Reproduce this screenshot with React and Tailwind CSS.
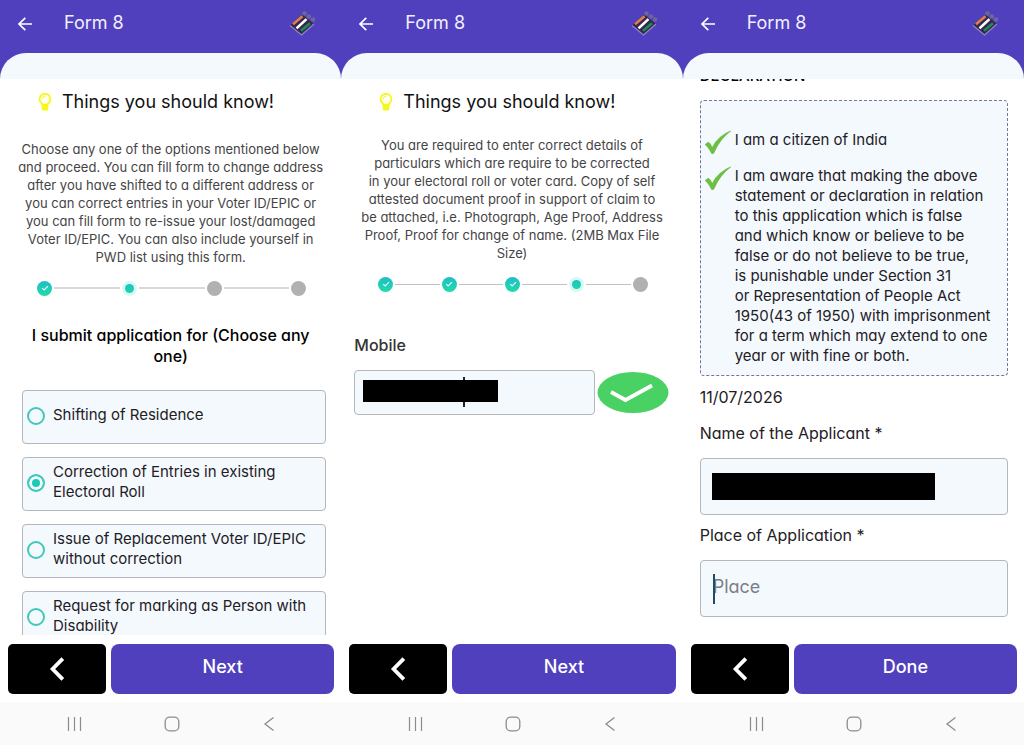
import React, { useState } from "react";

function EciLogo() {
  return (
    <svg viewBox="0 0 40 40" className="size-10" aria-hidden="true">
      <path d="M7 21.5 L19.5 10.5 L31 20 L18.5 31 Z" fill="#34284f" />
      <path d="M7 21.5 L18.5 31 L31 20" fill="none" stroke="#8f85c0" strokeWidth="1.3" />
      <g fill="#6f659c">
        <circle cx="21.5" cy="9.5" r="2.3" />
        <circle cx="25.8" cy="12.5" r="2.3" />
        <circle cx="30" cy="15.5" r="2.3" />
      </g>
      <g strokeWidth="2.6" strokeLinecap="square">
        <path d="M11 19.5 L18.5 13" stroke="#e08146" />
        <path d="M14.5 23.5 L22.5 16" stroke="#ffffff" />
        <path d="M19 26 L26 20" stroke="#1f8a55" />
      </g>
    </svg>
  );
}

function Header() {
  return (
    <header className="shrink-0 bg-[#5140bd]">
      <div className="flex h-[53px] items-start pl-4 pr-[18px]">
        <button type="button" aria-label="Back" className="mt-[15px] flex size-[18px] items-center justify-center">
          <svg viewBox="0 0 18 18" className="size-[18px]" fill="none" stroke="#fff" strokeWidth="1.7">
            <path d="M16 9 H3 M9.3 2.8 L3 9 L9.3 15.2" />
          </svg>
        </button>
        <h1 className="ml-[30px] mt-[11px] flex-1 text-lg leading-6 text-[#f1effc]">Form 8</h1>
        <div className="mt-1">
          <EciLogo />
        </div>
      </div>
      <div className="h-[26px] rounded-t-[30px] bg-[#f4f9fe]" />
    </header>
  );
}

function Footer({ label }) {
  return (
    <footer className="shrink-0">
      <div className="flex h-[67px] gap-[5px] pb-2 pl-2 pr-[7px] pt-[9px]">
        <button type="button" aria-label="Previous" className="flex w-[98px] items-center justify-center rounded-[5px] bg-black">
          <svg viewBox="0 0 16 24" className="h-6 w-4" fill="none" stroke="#fff" strokeWidth="3.8">
            <path d="M13.8 1.6 L3.6 12 L13.8 22.4" />
          </svg>
        </button>
        <button type="button" className="flex-1 rounded-lg bg-[#5140bd] pb-1 text-lg font-medium text-white">
          {label}
        </button>
      </div>
      <nav className="flex h-[43px] items-center justify-around bg-[#fafafa] pl-[26px] pr-6 text-[#8c8c8c]">
        <button type="button" aria-label="Recent apps">
          <svg viewBox="0 0 16 16" className="size-4" fill="none" stroke="currentColor" strokeWidth="1.2">
            <path d="M1.5 1 V15 M7.5 1 V15 M13.5 1 V15" />
          </svg>
        </button>
        <button type="button" aria-label="Home">
          <svg viewBox="0 0 16 16" className="size-4" fill="none" stroke="currentColor" strokeWidth="1.3">
            <rect x="1.2" y="1.2" width="13.6" height="13.6" rx="4.4" />
          </svg>
        </button>
        <button type="button" aria-label="Navigate back">
          <svg viewBox="0 0 16 16" className="size-4" fill="none" stroke="currentColor" strokeWidth="1.3">
            <path d="M12.5 1.6 L4 8 L12.5 14.4" />
          </svg>
        </button>
      </nav>
    </footer>
  );
}

function Phone({ action, children }) {
  return (
    <section className="flex min-w-0 flex-col overflow-hidden bg-white">
      <Header />
      <main className="min-h-0 flex-1 overflow-hidden">{children}</main>
      <Footer label={action} />
    </section>
  );
}

function TipTitle() {
  return (
    <div className="flex h-[37px] items-center gap-[9px] pl-[37px] pt-[9px]">
      <svg viewBox="0 0 16 20" className="h-5 w-4" aria-hidden="true">
        <path
          d="M8 1.8 A5.4 5.4 0 0 0 4.9 11.6 Q5.4 12.2 5.5 13.2 H10.5 Q10.6 12.2 11.1 11.6 A5.4 5.4 0 0 0 8 1.8 Z"
          fill="#fffff0"
          stroke="#f6f81c"
          strokeWidth="1.8"
        />
        <path d="M5 7.2 A3 3 0 0 1 8 4.4" fill="none" stroke="#f6f81c" strokeWidth="1" />
        <path d="M4.8 11.8 H11.2 V17.2 Q11.2 18.6 9.8 18.6 H6.2 Q4.8 18.6 4.8 17.2 Z" fill="#f6f81c" />
      </svg>
      <h2 className="whitespace-nowrap text-lg leading-7 text-[#111]">Things you should know!</h2>
    </div>
  );
}

function Step({ state }) {
  if (state === "todo") return <span className="size-[15px] shrink-0 rounded-full bg-[#b1b1b1]" />;
  if (state === "current") {
    return (
      <span className="flex size-[15px] shrink-0 items-center justify-center rounded-full bg-[#d5faf5]">
        <span className="size-[9px] rounded-full bg-linear-to-b from-[#22bfc4] to-[#22d6a8]" />
      </span>
    );
  }
  return (
    <span className="flex size-[15px] shrink-0 items-center justify-center rounded-full bg-linear-to-b from-[#21bdca] to-[#22dba3]">
      <svg viewBox="0 0 10 10" className="size-2.5" fill="none" stroke="#e9fffb" strokeWidth="1.1">
        <path d="M2.2 5.2 L4.2 7 L8 3.2" />
      </svg>
    </span>
  );
}

function Stepper({ steps, line }) {
  return (
    <div className="mt-3.5 flex h-4 items-center gap-0.5 pl-[37px] pr-[35px]">
      {steps.map((state, i) => (
        <React.Fragment key={i}>
          {i > 0 && <span className={`flex-1 ${line}`} />}
          <Step state={state} />
        </React.Fragment>
      ))}
    </div>
  );
}

const OPTIONS = [
  "Shifting of Residence",
  "Correction of Entries in existing\nElectoral Roll",
  "Issue of Replacement Voter ID/EPIC\nwithout correction",
  "Request for marking as Person with\nDisability",
];

function ChooseApplication() {
  const [selected, setSelected] = useState(1);
  return (
    <Phone action="Next">
      <TipTitle />
      <p className="mt-6 whitespace-pre text-center text-[13px] leading-[18px] text-[#444]">
        {`Choose any one of the options mentioned below
and proceed. You can fill form to change address
after you have shifted to a different address or
you can correct entries in your Voter ID/EPIC or
you can fill form to re-issue your lost/damaged
Voter ID/EPIC. You can also include yourself in
PWD list using this form.`}
      </p>
      <Stepper steps={["done", "current", "todo", "todo"]} line="h-0.5 bg-[#d9d9d9]" />
      <h3 className="mt-[29px] whitespace-pre text-center text-base font-medium leading-[21px] text-black">
        {"I submit application for (Choose any\none)"}
      </h3>
      <div className="mt-[23px] flex flex-col gap-[13px] pl-[22px] pr-[15px]">
        {OPTIONS.map((text, i) => (
          <label key={text} className="flex h-[54px] items-center gap-2 rounded border border-[#b3b6ba] bg-[#f4f9fe] pb-0.5 pl-1">
            <input
              type="radio"
              name="application"
              checked={selected === i}
              onChange={() => setSelected(i)}
              className="size-[18px] shrink-0 appearance-none rounded-full border-2 border-[#41c8b8] checked:bg-[#1fcab5] checked:shadow-[inset_0_0_0_3px_#f4f9fe]"
            />
            <span className="whitespace-pre pb-0.5 text-[15px] leading-5 text-[#1e2024]">{text}</span>
          </label>
        ))}
      </div>
    </Phone>
  );
}

function MobileDetails() {
  return (
    <Phone action="Next">
      <TipTitle />
      <p className="mt-5 whitespace-pre text-center text-[13px] leading-[18px] text-[#444]">
        {`You are required to enter correct details of
particulars which are require to be corrected
in your electoral roll or voter card. Copy of self
attested document proof in support of claim to
be attached, i.e. Photograph, Age Proof, Address
Proof, Proof for change of name. (2MB Max File
Size)`}
      </p>
      <Stepper steps={["done", "done", "done", "current", "todo"]} line="h-px bg-[#c2c2c2]" />
      <div className="mt-[41px] pl-[13px] pr-[14px]">
        <label htmlFor="mobile" className="block text-base font-medium leading-6 text-[#333]">
          Mobile
        </label>
        <div className="mt-[13px] flex items-center gap-0.5">
          <div className="relative min-w-0 flex-1">
            <input id="mobile" type="tel" className="block h-[45px] w-full rounded border border-[#b3b6ba] bg-[#f4f9fe] px-2 outline-none" />
            <span className="pointer-events-none absolute left-[109px] top-[7px] h-[30px] w-0.5 bg-[#132a36]" />
            <span className="pointer-events-none absolute left-[9px] top-2.5 h-[22px] w-[135px] bg-black" />
          </div>
          <svg viewBox="0 0 72 42" className="h-[42px] w-[72px] shrink-0" role="img" aria-label="Verified">
            <ellipse cx="36" cy="20.5" rx="35.5" ry="20.5" fill="#49d163" />
            <path d="M14 20 L28.5 28 L55 13.5" fill="none" stroke="#fff" strokeWidth="3.8" />
          </svg>
        </div>
      </div>
    </Phone>
  );
}

function GreenCheck() {
  return (
    <svg viewBox="0 0 27 26" className="h-[26px] w-[27px] shrink-0" aria-hidden="true">
      <path d="M0.8 14.6 L4.2 11.8 Q6.8 13.2 8.2 17 Q14 5.8 26.6 0.6 Q27.2 1 26.6 1.6 Q16.6 8.6 10.2 23 Q8.6 25 7.2 23.2 Q4.8 18 0.8 14.6 Z" fill="#6fbf45" />
    </svg>
  );
}

function Declaration() {
  return (
    <Phone action="Done">
      <div className="pl-[17px] pr-4 text-[#1e2024]">
        <h2 className="-mt-[13px] text-[15px] font-medium leading-5 text-black">DECLARATION</h2>
        <ul className="mt-3.5 flex flex-col gap-4 rounded border border-dashed border-[#77749a] bg-[#f4f9fe] pb-[9px] pl-[3px] pt-[29px] text-[15px] leading-5">
          <li className="flex h-5 gap-1">
            <GreenCheck />
            <span className="whitespace-pre">I am a citizen of India</span>
          </li>
          <li className="flex gap-1">
            <GreenCheck />
            <span className="whitespace-pre">
              {`I am aware that making the above
statement or declaration in relation
to this application which is false
and which know or believe to be
false or do not believe to be true,
is punishable under Section 31
or Representation of People Act
1950(43 of 1950) with imprisonment
for a term which may extend to one
year or with fine or both.`}
            </span>
          </li>
        </ul>
        <p className="mt-[9px] text-base leading-6">11/07/2026</p>
        <label htmlFor="applicant" className="mt-3 block text-base leading-6">
          Name of the Applicant *
        </label>
        <div className="relative mt-[13px]">
          <input id="applicant" type="text" className="block h-[57px] w-full rounded border border-[#b3b6ba] bg-[#f4f9fe] px-3 outline-none" />
          <span className="pointer-events-none absolute left-3 top-[15px] h-[27px] w-[223px] bg-black" />
        </div>
        <label htmlFor="place" className="mt-2 block text-base leading-6">
          Place of Application *
        </label>
        <div className="relative mt-[13px]">
          <input
            id="place"
            type="text"
            placeholder="Place"
            className="block h-[57px] w-full rounded border border-[#b3b6ba] bg-[#f4f9fe] px-3 pb-1 text-lg outline-none placeholder:text-[#7b7f84]"
          />
          <span className="pointer-events-none absolute left-[13px] top-3.5 h-[30px] w-0.5 bg-[#1d4e63]" />
        </div>
      </div>
    </Phone>
  );
}

export default function App() {
  return (
    <div className="grid h-screen grid-cols-3 bg-white font-['Inter','Open_Sans',sans-serif] [font-feature-settings:'cv11']">
      <ChooseApplication />
      <MobileDetails />
      <Declaration />
    </div>
  );
}
